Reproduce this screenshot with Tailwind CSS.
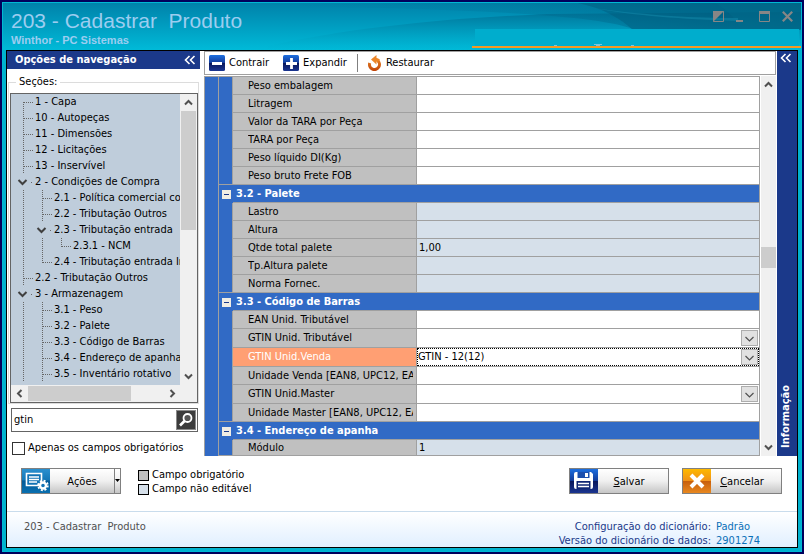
<!DOCTYPE html>
<html lang="pt-BR">
<head>
    <meta charset="UTF-8">
    <meta name="viewport" content="width=device-width, initial-scale=1.0">
    <title>203 - Cadastrar Produto</title>
    <script src="https://cdn.jsdelivr.net/npm/@tailwindcss/browser@4"></script>
</head>
<body class="min-h-screen flex flex-col bg-[#00b2cf] border-2 border-[#00005c] font-['DejaVu_Sans_Condensed','DejaVu_Sans',sans-serif] text-[11px] leading-[14px] text-black">
    <!-- icon sprites -->
    <svg class="absolute w-0 h-0" aria-hidden="true">
        <symbol id="left2" viewBox="0 0 12 10"><path d="M5.500 1 1.500 5l4 4M10.500 1l-4 4 4 4" fill="none" stroke="#fff" stroke-width="1.6"/></symbol>
        <symbol id="up" viewBox="0 0 9 9"><path d="M1 6.500 4.500 3 8 6.500" fill="none" stroke="#505050" stroke-width="2"/></symbol>
        <symbol id="down" viewBox="0 0 9 9"><path d="M1 2.500 4.500 6 8 2.500" fill="none" stroke="#505050" stroke-width="2"/></symbol>
        <symbol id="left" viewBox="0 0 9 9"><path d="M6.500 1 3 4.500 6.500 8" fill="none" stroke="#505050" stroke-width="2"/></symbol>
        <symbol id="right" viewBox="0 0 9 9"><path d="M2.500 1 6 4.500 2.500 8" fill="none" stroke="#505050" stroke-width="2"/></symbol>
        <symbol id="g-first" viewBox="0 0 19 16"><path d="M9.500 8v8M10 8.500h9" fill="none" stroke="#666" stroke-dasharray="1 1"/></symbol>
        <symbol id="g-tee" viewBox="0 0 19 16"><path d="M9.500 0v16M10 8.500h9" fill="none" stroke="#666" stroke-dasharray="1 1"/></symbol>
        <symbol id="g-elbow" viewBox="0 0 19 16"><path d="M9.500 0v9M10 8.500h9" fill="none" stroke="#666" stroke-dasharray="1 1"/></symbol>
        <symbol id="g-line" viewBox="0 0 19 16"><path d="M9.500 0v16" fill="none" stroke="#666" stroke-dasharray="1 1"/></symbol>
        <symbol id="g-open" viewBox="0 0 19 16"><path d="M4.500 6 8.500 10l4-4" fill="none" stroke="#404040" stroke-width="2"/><path d="M17 8.500h1" stroke="#666"/></symbol>
        <linearGradient id="navy" x1="0" y1="0" x2="0" y2="1"><stop offset="0" stop-color="#1d6fe0"/><stop offset=".5" stop-color="#123a98"/><stop offset=".52" stop-color="#08175c"/><stop offset="1" stop-color="#1a3590"/></linearGradient>
        <linearGradient id="fire" gradientUnits="userSpaceOnUse" x1="0" y1="0" x2="0" y2="16"><stop offset="0" stop-color="#f59a30"/><stop offset="1" stop-color="#c04408"/></linearGradient>
        <linearGradient id="blue" x1="0" y1="0" x2="0" y2="1"><stop offset="0" stop-color="#2b90cf"/><stop offset=".45" stop-color="#1478b8"/><stop offset=".5" stop-color="#045a98"/><stop offset="1" stop-color="#0a70b0"/></linearGradient>
        <linearGradient id="amber" x1="0" y1="0" x2="0" y2="1"><stop offset="0" stop-color="#fdb900"/><stop offset=".5" stop-color="#f09018"/><stop offset=".52" stop-color="#c8600c"/><stop offset="1" stop-color="#e88820"/></linearGradient>
    </svg>

    <div class="flex-1 flex flex-col border border-[#00b8d4]">
        <!-- title bar -->
        <header class="relative h-[47px] flex justify-between bg-linear-to-b from-[#0082aa] to-[#00bad8]">
            <svg class="absolute inset-0 w-full h-full" viewBox="0 0 798 47" preserveAspectRatio="none" aria-hidden="true">
                <defs>
                    <linearGradient id="sw1" x1="0" y1="0" x2="0" y2="1"><stop offset="0" stop-color="#006f94" stop-opacity=".85"/><stop offset="1" stop-color="#00b6d4" stop-opacity=".1"/></linearGradient>
                    <linearGradient id="sw2" x1="0" y1="0" x2="1" y2="0"><stop offset="0" stop-color="#0079a2" stop-opacity="0"/><stop offset="1" stop-color="#005272"/></linearGradient>
                </defs>
                <path d="M265 43C350 24 450 15 545 11L798 9V47H265z" fill="url(#sw1)"/>
                <path d="M265 3C420-2 500 0 580 0h218v26H630C600 14 500 6 265 3z" fill="url(#sw2)" opacity=".55"/>
                <path d="M575 0C600 5 618 16 630 27H798V0z" fill="#005c7c" opacity=".45"/>
                <path d="M712 0c14 8 22 17 26 27h60V0z" fill="#00708e" opacity=".35"/>
                <path d="M590 5c60 8 100 10 145 10v3c-60-2-100-5-145-13z" fill="#1a93b4" opacity=".4"/>
                <path d="M472 26H796v18H472z" fill="#00adcd"/>
                <path d="M551 42.500h3M591 41.500h8M593 42.500h4M628 42.500h3" stroke="#7cc3df"/>
                <path d="M469 44H798" stroke="#f59a22" stroke-width="2"/>
            </svg>
            <div class="relative pl-2 pt-1 font-['Liberation_Sans',Arial,sans-serif] text-[#9ccdf0]">
                <h1 class="text-[21px] leading-7 whitespace-pre">203 - Cadastrar  Produto</h1>
                <p class="text-[11px] leading-[11px] font-bold">Winthor - PC Sistemas</p>
            </div>
            <div class="relative flex items-start gap-3 pt-2 pr-2 text-[#868686]">
                <button type="button" aria-label="Tema"><svg class="w-[11px] h-[11px]" viewBox="0 0 11 11"><path d="M.5.500h10v10H.5z" fill="none" stroke="currentColor"/><path d="M0 0h11L0 11z" fill="currentColor"/></svg></button>
                <button type="button" aria-label="Minimizar"><svg class="w-[11px] h-[11px]" viewBox="0 0 11 11"><path d="M0 9h7v2H0z" fill="currentColor"/></svg></button>
                <button type="button" aria-label="Maximizar"><svg class="w-[11px] h-[11px]" viewBox="0 0 11 11"><path d="M.5.500h10v10H.5z" fill="none" stroke="currentColor"/><path d="M0 0h11v3H0z" fill="currentColor"/></svg></button>
                <button type="button" aria-label="Fechar"><svg class="w-[11px] h-[11px]" viewBox="0 0 11 11"><path d="m.8.800 9.400 9.400M10.200.800.800 10.200" stroke="currentColor" stroke-width="2.200"/></svg></button>
            </div>
        </header>

        <div class="flex-1 flex flex-col mx-[3px] mb-[3px] border border-black bg-white">
            <div class="flex">
                <!-- navigation -->
                <aside class="w-[193px] shrink-0 flex flex-col">
                    <div class="h-[18px] flex items-center justify-between bg-[#1b398a] text-white pl-2 pr-1">
                        <h2 class="font-bold">Opções de navegação</h2>
                        <button type="button" aria-label="Recolher"><svg class="w-3 h-[10px]"><use href="#left2"/></svg></button>
                    </div>
                    <fieldset class="mt-[6px] mx-px min-w-0 border border-[#dcdcdc] pt-1 pl-px">
                        <legend class="ml-[6px] px-[3px]">Seções:</legend>
                        <div class="border border-[#646464] bg-[#f0f0f0]">
                            <div class="flex">
                                <ul id="tree" class="flex-1 min-w-0 overflow-hidden bg-[#bfcddb] pb-[3px]"></ul>
                                <div class="w-[17px] flex flex-col items-center" aria-hidden="true">
                                    <svg class="w-[9px] h-[9px] my-1"><use href="#up"/></svg>
                                    <div class="w-[15px] h-[119px] bg-[#cdcdcd]"></div>
                                    <svg class="w-[9px] h-[9px] mt-auto mb-1"><use href="#down"/></svg>
                                </div>
                            </div>
                            <div class="h-[17px] flex items-center pl-1 pr-5" aria-hidden="true">
                                <svg class="w-[9px] h-[9px]"><use href="#left"/></svg>
                                <div class="ml-1 w-[103px] h-[15px] bg-[#cdcdcd]"></div>
                                <svg class="w-[9px] h-[9px] ml-auto"><use href="#right"/></svg>
                            </div>
                        </div>
                    </fieldset>
                    <form class="mt-1 ml-1 mr-[2px]" onsubmit="return false">
                        <div class="flex items-center h-6 border border-[#646464] pr-px">
                            <input type="search" aria-label="Pesquisar campo" value="gtin" class="flex-1 min-w-0 px-[2px] outline-none">
                            <button aria-label="Pesquisar" class="w-5 h-5 flex items-center justify-center bg-[#3c3c3c] border border-[#8a8a8a]">
                                <svg class="w-4 h-4" viewBox="0 0 16 16"><circle cx="9.500" cy="6" r="4" fill="#555" stroke="#fff" stroke-width="1.800"/><path d="M6.500 9 2 13.500" stroke="#fff" stroke-width="2.600"/></svg>
                            </button>
                        </div>
                        <div class="flex items-center gap-[3px] mt-[9px]">
                            <input type="checkbox" id="obrig" class="appearance-none w-[13px] h-[13px] ml-px border border-[#333] bg-white checked:bg-[#1b398a]">
                            <label for="obrig" class="whitespace-nowrap">Apenas os campos obrigatórios</label>
                        </div>
                    </form>
                </aside>

                <!-- form grid -->
                <main class="flex-1 min-w-0 ml-1 mr-px flex flex-col">
                    <div class="h-6 mb-px flex items-center border border-[#a0a0a0] pl-1">
                        <button type="button" class="flex items-center gap-1">
                            <svg class="w-4 h-4" viewBox="0 0 16 16"><rect width="16" height="16" rx="1.500" fill="url(#navy)"/><path d="M3 8.500h10" stroke="#fff" stroke-width="3"/></svg>Contrair
                        </button>
                        <button type="button" class="flex items-center gap-1 ml-[14px]">
                            <svg class="w-4 h-4" viewBox="0 0 16 16"><rect width="16" height="16" rx="1.500" fill="url(#navy)"/><path d="M3 8.500h11M8.500 3v11" stroke="#fff" stroke-width="2.800"/></svg>Expandir
                        </button>
                        <span class="w-px h-[18px] ml-[10px] bg-[#808080]"></span>
                        <button type="button" class="flex items-center gap-1 ml-[10px]">
                            <svg class="w-[14px] h-4" viewBox="0 0 14 16"><path d="M1.700 8A5 5 0 1 0 9.500 5.500" fill="none" stroke="url(#fire)" stroke-width="3"/><path d="M3 4.500 8.500 0v3c1.500.2 3 1 3.500 2L9.500 7l-1-.5V9.500z" fill="#ec8628"/></svg>Restaurar
                        </button>
                    </div>
                    <div class="flex-1 flex gap-px">
                        <div class="flex-1 min-w-0">
                            <table class="w-full table-fixed border-separate border-spacing-0 border-t border-l border-[#a0a0a0]">
                                <colgroup><col class="w-[14px]"><col class="w-[14px]"><col class="w-[184px]"><col></colgroup>
                                <tbody id="grid"></tbody>
                            </table>
                        </div>
                        <div class="w-[15px] flex flex-col items-center bg-[#f0f0f0]" aria-hidden="true">
                            <svg class="w-[9px] h-[9px] mt-1"><use href="#up"/></svg>
                            <div class="flex-[9]"></div>
                            <div class="w-full h-[21px] bg-[#cdcdcd]"></div>
                            <div class="flex-[10]"></div>
                            <svg class="w-[9px] h-[9px] mb-1"><use href="#down"/></svg>
                        </div>
                    </div>
                </main>

                <aside class="w-5 shrink-0 flex flex-col items-center justify-between pt-[2px] pb-2 pr-[3px] bg-[#1b398a] text-white">
                    <button type="button" aria-label="Expandir informação"><svg class="w-3 h-[10px]"><use href="#left2"/></svg></button>
                    <h2 class="font-bold [writing-mode:vertical-rl] rotate-180">Informação</h2>
                </aside>
            </div>

            <!-- actions -->
            <div class="flex items-start pt-3 pl-[14px] pr-[15px]">
                <button type="button" class="flex w-[100px] h-[26px] border border-[#808080] bg-linear-to-b from-white via-[#f0f0f0] to-[#c6c6c6]">
                    <svg class="w-7 h-6 shrink-0" viewBox="0 0 28 24"><path d="M0 0h28v24H0z" fill="url(#blue)"/><path d="M4.500 4.500h15v12h-15z" fill="#1273b5" stroke="#fff" stroke-width="1.600"/><path d="M7 8h10M7 10.500h10M7 13h8" stroke="#fff" stroke-width="1.300"/><circle cx="21" cy="16.500" r="4.800" fill="none" stroke="#fff" stroke-width="1.800" stroke-dasharray="2 1.770"/><circle cx="21" cy="16.500" r="3" fill="#1273b5" stroke="#fff" stroke-width="2.400"/></svg>
                    <span class="flex-1 pt-[6px]">Ações</span>
                    <span class="w-[6px] h-6 border-l border-[#808080] pt-[10px]"><svg class="w-[5px] h-[3px]" viewBox="0 0 5 3"><path d="M0 0h5L2.500 3z"/></svg></span>
                </button>
                <ul class="ml-[17px]">
                    <li class="flex items-center gap-[3px]"><span class="w-[11px] h-[11px] border border-black bg-[#c0c0c0]"></span>Campo obrigatório</li>
                    <li class="flex items-center gap-[3px]"><span class="w-[11px] h-[11px] border border-black bg-[#d6e0ea]"></span>Campo não editável</li>
                </ul>
                <div class="ml-auto flex gap-[13px]">
                    <button type="button" class="flex w-[100px] h-[26px] border border-[#808080] bg-linear-to-b from-white via-[#f0f0f0] to-[#c6c6c6]">
                        <svg class="w-7 h-6 shrink-0" viewBox="0 0 28 24"><path d="M0 0h28v24H0z" fill="url(#navy)"/><path d="M4 5q0-2 2-2h15l2 2v13q0 2-2 2H6q-2 0-2-2z" fill="#fff"/><path d="M7.500 3h12v6h-12z" fill="#1b4fae"/><path d="M8.500 3h5v5h-5zM16 4h2v4h-2z" fill="#1b4fae"/><path d="M15 4h3v4h-3z" fill="#fff"/><path d="M6.500 12h14v8h-14z" fill="#0f2674"/><path d="M8 14.500h11M8 17.500h11" stroke="#fff" stroke-width="1.600"/></svg>
                        <span class="flex-1 pt-[6px] pr-2"><u>S</u>alvar</span>
                    </button>
                    <button type="button" class="flex w-[100px] h-[26px] border border-[#808080] bg-linear-to-b from-white via-[#f0f0f0] to-[#c6c6c6]">
                        <svg class="w-7 h-6 shrink-0" viewBox="0 0 28 24"><path d="M0 0h28v24H0z" fill="url(#amber)"/><path d="m8 6 12 12M20 6 8 18" stroke="#fff" stroke-width="4"/></svg>
                        <span class="flex-1 pt-[6px] pr-2"><u>C</u>ancelar</span>
                    </button>
                </div>
            </div>

            <footer class="mt-auto h-9 flex justify-between pt-2 pl-[17px] pr-8 border-t border-[#c9dcec] bg-linear-to-b from-white to-[#e0efff] text-[#505050]">
                <p class="whitespace-pre">203 - Cadastrar  Produto</p>
                <dl class="grid grid-cols-[auto_49px] gap-x-[5px] text-right text-[#1b398a]">
                    <dt>Configuração do dicionário:</dt><dd class="text-left text-[#0a70b8]">Padrão</dd>
                    <dt>Versão do dicionário de dados:</dt><dd class="text-left text-[#0a70b8]">2901274</dd>
                </dl>
            </footer>
        </div>
    </div>

    <script>
        // guides for each level, then the label
        const tree = [
            ["first", "1 - Capa"],
            ["tee", "10 - Autopeças"],
            ["tee", "11 - Dimensões"],
            ["tee", "12 - Licitações"],
            ["tee", "13 - Inservível"],
            ["open", "2 - Condições de Compra"],
            ["line tee", "2.1 - Política comercial com"],
            ["line tee", "2.2 - Tributação Outros"],
            ["line open", "2.3 - Tributação entrada"],
            ["line line elbow", "2.3.1 - NCM"],
            ["line elbow", "2.4 - Tributação entrada In"],
            ["tee", "2.2 - Tributação Outros"],
            ["open", "3 - Armazenagem"],
            ["line tee", "3.1 - Peso"],
            ["line tee", "3.2 - Palete"],
            ["line tee", "3.3 - Código de Barras"],
            ["line tee", "3.4 - Endereço de apanha"],
            ["line tee", "3.5 - Inventário rotativo"]
        ];

        document.getElementById("tree").innerHTML = tree.map(([guides, label]) => `
            <li class="flex h-4 pl-[3px] whitespace-nowrap">
                ${guides.split(" ").map(g => `<svg class="w-[19px] h-4 shrink-0"><use href="#g-${g}"/></svg>`).join("")}
                <a href="#" class="pl-[2px] leading-4">${label}</a>
            </li>`).join("");

        // type: head, edit, read, combo
        const rows = [
            ["edit", "Peso embalagem", ""],
            ["edit", "Litragem", ""],
            ["edit", "Valor da TARA por Peça", ""],
            ["edit", "TARA por Peça", ""],
            ["edit", "Peso líquido DI(Kg)", ""],
            ["edit", "Peso bruto Frete FOB", ""],
            ["head", "3.2 - Palete"],
            ["read", "Lastro", ""],
            ["read", "Altura", ""],
            ["read", "Qtde total palete", "1,00"],
            ["read", "Tp.Altura palete", ""],
            ["read", "Norma Fornec.", ""],
            ["head", "3.3 - Código de Barras"],
            ["edit", "EAN Unid. Tributável", ""],
            ["combo", "GTIN Unid. Tributável", ""],
            ["combo", "GTIN Unid.Venda", "GTIN - 12(12)"],
            ["edit", "Unidade Venda [EAN8, UPC12, EAN", ""],
            ["combo", "GTIN Unid.Master", ""],
            ["edit", "Unidade Master [EAN8, UPC12, EA", ""],
            ["head", "3.4 - Endereço de apanha"],
            ["read", "Módulo", "1"]
        ];

        document.getElementById("grid").innerHTML = rows.map(([type, label, value], i) => {
            const outer = i === 0 ? `<td rowspan="${rows.length}" class="border-r border-[#a0a0a0] bg-[#316ac5]"></td>` : "";
            if (type === "head") {
                return `<tr>${outer}
                    <td class="h-[18px] p-0 pl-[3px] bg-[#316ac5]"><button type="button" aria-label="Recolher ${label}" class="block w-[9px] h-[9px] bg-[#f0ede4]"><svg class="w-[9px] h-[9px]" viewBox="0 0 9 9"><path d="M2 4.500h5" stroke="#1b398a"/></svg></button></td>
                    <th colspan="2" class="p-0 pl-[3px] text-left font-bold text-white bg-[#316ac5] border-b border-r border-[#a0a0a0]">${label}</th></tr>`;
            }
            const last = i === rows.length - 1;
            const active = label === "GTIN Unid.Venda";
            const beforeHead = last || rows[i + 1][0] === "head";
            const height = last ? "h-4" : type === "combo" ? "h-[19px]" : "h-[18px]";
            const field = type === "combo"
                ? `<div class="relative h-[18px] ${active ? "border border-dotted border-black" : "border border-transparent"}">
                       <select id="f${i}" class="appearance-none block w-full h-4 outline-none"><option>${value}</option></select>
                       <span class="absolute right-0 top-0 w-[17px] h-4 flex items-center justify-center border border-[#adadad] bg-[#e1e1e1] pointer-events-none"><svg class="w-[9px] h-[9px]" viewBox="0 0 9 9"><path d="M.5 3 4.500 7l4-4" fill="none" stroke="#505050" stroke-width="1.200"/></svg></span>
                   </div>`
                : `<input id="f${i}" type="text" value="${value}" ${type === "read" ? "readonly" : ""} class="block w-full h-[15px] px-[2px] outline-none">`;
            return `<tr>${outer}
                <td class="p-0 border-r border-[#a0a0a0] bg-[#316ac5] ${beforeHead ? "border-b" : ""}"></td>
                <th scope="row" class="${height} p-0 pl-[15px] pr-[3px] text-left font-normal border-r border-b border-[#a0a0a0] ${active ? "bg-[#ff9f73] text-white" : "bg-[#c0c0c0]"}"><label for="f${i}" class="block overflow-hidden whitespace-nowrap">${label}</label></th>
                <td class="p-0 border-r border-b border-[#a0a0a0] ${type === "read" ? "bg-[#d6e0ea]" : "bg-white"}">${field}</td></tr>`;
        }).join("");
    </script>
</body>
</html>
